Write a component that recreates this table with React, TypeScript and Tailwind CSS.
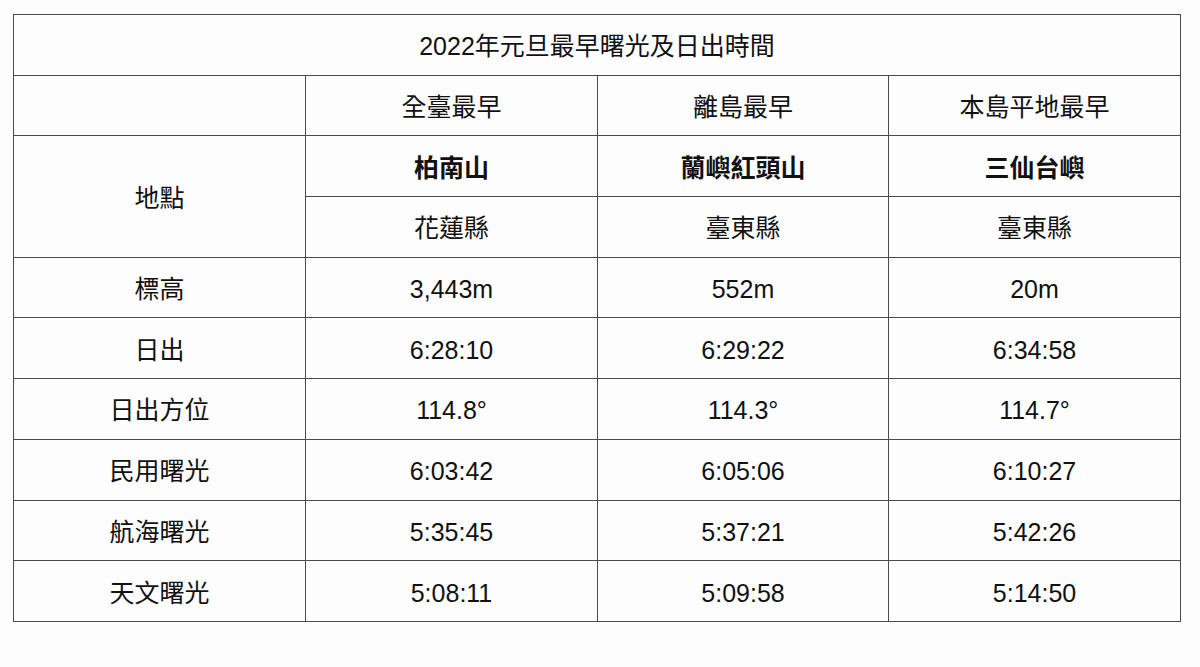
const rows: string[][] = [
  ["標高", "3,443m", "552m", "20m"],
  ["日出", "6:28:10", "6:29:22", "6:34:58"],
  ["日出方位", "114.8°", "114.3°", "114.7°"],
  ["民用曙光", "6:03:42", "6:05:06", "6:10:27"],
  ["航海曙光", "5:35:45", "5:37:21", "5:42:26"],
  ["天文曙光", "5:08:11", "5:09:58", "5:14:50"],
];

const cell = "border border-[#4a4a4a] text-center align-middle h-[60.7px] p-0 pt-[4px] leading-none";

export default function App() {
  return (
    <div
      className="w-[1200px] h-[667px] bg-[#fcfdfc] pl-[13px] pt-[14px] text-[25px] text-[#111]"
      style={{ fontFamily: '"Liberation Sans", Arial, "Noto Sans CJK TC", sans-serif' }}
    >
      <table className="w-[1167px] border-collapse table-fixed">
        <colgroup>
          <col className="w-[292px]" />
          <col className="w-[292px]" />
          <col className="w-[291px]" />
          <col className="w-[292px]" />
        </colgroup>
        <tbody>
          <tr>
            <td colSpan={4} className={cell}>2022年元旦最早曙光及日出時間</td>
          </tr>
          <tr>
            <td className={cell}></td>
            <td className={cell}>全臺最早</td>
            <td className={cell}>離島最早</td>
            <td className={cell}>本島平地最早</td>
          </tr>
          <tr>
            <td rowSpan={2} className={cell}>地點</td>
            <td className={cell + " font-bold"}>柏南山</td>
            <td className={cell + " font-bold"}>蘭嶼紅頭山</td>
            <td className={cell + " font-bold"}>三仙台嶼</td>
          </tr>
          <tr>
            <td className={cell}>花蓮縣</td>
            <td className={cell}>臺東縣</td>
            <td className={cell}>臺東縣</td>
          </tr>
          {rows.map((r) => (
            <tr key={r[0]}>
              {r.map((v, i) => (
                <td key={i} className={cell}>{v}</td>
              ))}
            </tr>
          ))}
        </tbody>
      </table>
    </div>
  );
}
